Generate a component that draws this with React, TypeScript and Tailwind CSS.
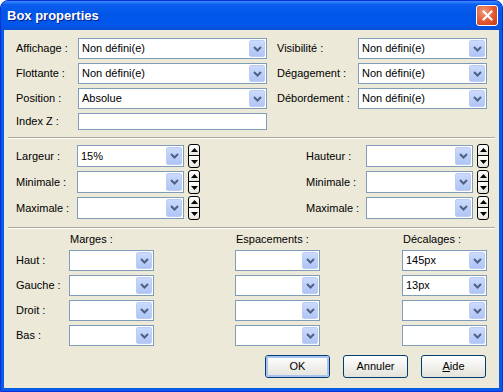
const font = "font-['Liberation_Sans',Arial,sans-serif]";

function Chevron() {
  return (
    <svg width="9" height="6" viewBox="0 0 9 6">
      <path d="M1 1l3.5 3.5L8 1" fill="none" stroke="#4d6185" strokeWidth="2" />
    </svg>
  );
}

function Combo({ value = "", w }: { value?: string; w: string }) {
  return (
    <div className={`flex h-full items-center border border-[#7f9db9] bg-white p-[1px] ${w}`}>
      <span className="flex-1 truncate pl-[2px] leading-none">{value}</span>
      <div className="flex h-full w-[16px] items-center justify-center rounded-[2px] border border-[#bccdf4] bg-gradient-to-b from-[#cbdafc] to-[#b0c5f6]">
        <Chevron />
      </div>
    </div>
  );
}

function Spin() {
  return (
    <div className="flex h-[24px] w-[12px] flex-col">
      <div className="flex h-[12px] items-center justify-center rounded-t-[3px] border border-black bg-gradient-to-b from-white to-[#e6e4dc]">
        <svg width="7" height="4" viewBox="0 0 7 4">
          <path d="M0 4h7L3.5 0z" fill="black" />
        </svg>
      </div>
      <div className="-mt-[1px] flex h-[13px] items-center justify-center rounded-b-[3px] border border-black bg-gradient-to-b from-white to-[#e6e4dc]">
        <svg width="7" height="4" viewBox="0 0 7 4">
          <path d="M0 0h7L3.5 4z" fill="black" />
        </svg>
      </div>
    </div>
  );
}

function SizeRow({ label, value, lw }: { label: string; value?: string; lw: string }) {
  return (
    <div className="flex h-[22px] items-center">
      <span className={lw}>{label}</span>
      <Combo value={value} w="w-[107px]" />
      <div className="ml-[4px] self-center">
        <Spin />
      </div>
    </div>
  );
}

function Separator() {
  return <div className="mx-[4px] h-[2px] border-t border-b border-t-[#aca899] border-b-white" />;
}

function XpButton({ children, primary }: { children: React.ReactNode; primary?: boolean }) {
  return (
    <div className="h-[23px] w-[65px] rounded-[3px] border border-[#003c74] bg-gradient-to-b from-white to-[#e3e2da]">
      <div
        className={`flex h-full w-full items-center justify-center rounded-[2px] ${
          primary ? "border-2 border-[#a9c2f1]" : ""
        }`}
      >
        {children}
      </div>
    </div>
  );
}

export default function App() {
  const offsets = [
    { label: "Haut :", d: "145px" },
    { label: "Gauche :", d: "13px" },
    { label: "Droit :", d: "" },
    { label: "Bas :", d: "" },
  ];

  return (
    <div className={`flex h-[392px] w-[503px] flex-col overflow-hidden rounded-t-[8px] border border-[#0831d9] bg-[#0a5ae8] ${font}`}>
      {/* Title bar */}
      <div className="flex h-[29px] shrink-0 items-center justify-between bg-[linear-gradient(to_bottom,#3c8ffa_0%,#0b5ef0_12%,#0056e6_45%,#0057ec_80%,#0a4fd6_100%)] pl-[6px] pr-[4px]">
        <span className="text-[13px] font-bold text-white [text-shadow:1px_1px_0_#0a1e8a]">Box properties</span>
        <div className="flex h-[21px] w-[22px] items-center justify-center rounded-[3px] border border-white bg-[radial-gradient(circle_at_35%_30%,#f29a7a_0%,#e2572f_55%,#c23a15_100%)]">
          <svg width="11" height="11" viewBox="0 0 11 11">
            <path d="M1.5 1.5l8 8M9.5 1.5l-8 8" stroke="white" strokeWidth="2.2" strokeLinecap="round" />
          </svg>
        </div>
      </div>

      {/* Body */}
      <div className="mx-[3px] mb-[3px] flex flex-1 flex-col bg-[#ece9d8] text-[11px] text-black">
        {/* Section 1 */}
        <div className="flex pl-[12px] pt-[8px]">
          <div className="grid grid-cols-[62px_189px] grid-rows-[21px_21px_21px_17px] items-center gap-y-[4px]">
            <span>Affichage :</span>
            <Combo value="Non défini(e)" w="w-[189px]" />
            <span>Flottante :</span>
            <Combo value="Non défini(e)" w="w-[189px]" />
            <span>Position :</span>
            <Combo value="Absolue" w="w-[189px]" />
            <span>Index Z :</span>
            <div className="h-full w-[189px] border border-[#7f9db9] bg-white" />
          </div>
          <div className="ml-[10px] grid grid-cols-[81px_129px] grid-rows-[21px_21px_21px] items-center gap-y-[4px]">
            <span>Visibilité :</span>
            <Combo value="Non défini(e)" w="w-[129px]" />
            <span>Dégagement :</span>
            <Combo value="Non défini(e)" w="w-[129px]" />
            <span>Débordement :</span>
            <Combo value="Non défini(e)" w="w-[129px]" />
          </div>
        </div>

        <div className="mt-[7px]">
          <Separator />
        </div>

        {/* Section 2 */}
        <div className="mt-[6px] flex pl-[12px]">
          <div className="flex flex-col gap-[4px]">
            <SizeRow label="Largeur :" value="15%" lw="w-[61px]" />
            <SizeRow label="Minimale :" lw="w-[61px]" />
            <SizeRow label="Maximale :" lw="w-[61px]" />
          </div>
          <div className="ml-[106px] flex flex-col gap-[4px]">
            <SizeRow label="Hauteur :" lw="w-[60px]" />
            <SizeRow label="Minimale :" lw="w-[60px]" />
            <SizeRow label="Maximale :" lw="w-[60px]" />
          </div>
        </div>

        <div className="mt-[8px]">
          <Separator />
        </div>

        {/* Section 3 */}
        <div className="mt-[4px] grid grid-cols-[53px_85px_81px_85px_82px_85px] grid-rows-[13px] auto-rows-[21px] items-center gap-y-[4px] pl-[12px]">
          <span />
          <span className="pl-[1px]">Marges :</span>
          <span />
          <span className="pl-[1px]">Espacements :</span>
          <span />
          <span className="pl-[1px]">Décalages :</span>
          {offsets.map((o, i) => (
            <div key={o.label} className={`contents ${i === 0 ? "" : ""}`}>
              <span>{o.label}</span>
              <Combo w="w-[85px]" />
              <span />
              <Combo w="w-[85px]" />
              <span />
              <Combo value={o.d} w="w-[85px]" />
            </div>
          ))}
        </div>

        {/* Buttons */}
        <div className="mt-[9px] flex justify-end gap-[13px] pr-[13px]">
          <XpButton primary>OK</XpButton>
          <XpButton>Annuler</XpButton>
          <XpButton>
            <span>
              <span className="underline">A</span>ide
            </span>
          </XpButton>
        </div>
      </div>
    </div>
  );
}
